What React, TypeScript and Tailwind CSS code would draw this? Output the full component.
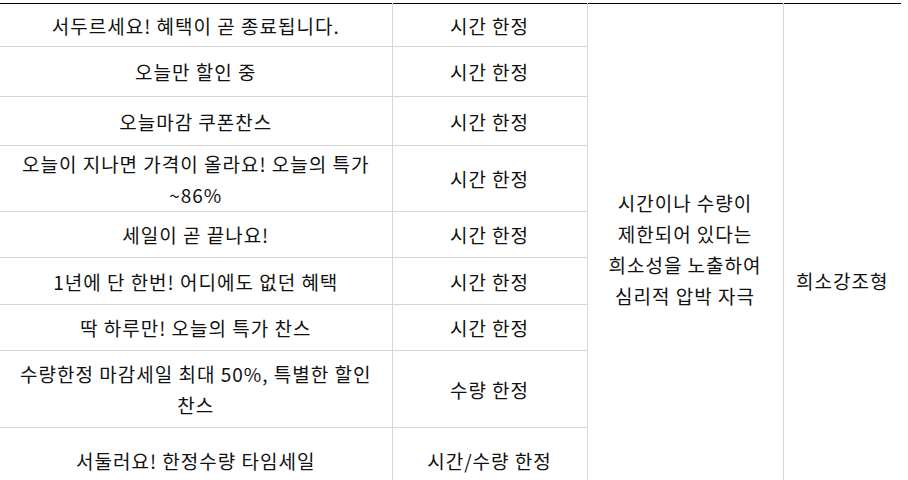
const rows: { text: string[]; kind: string; h: string }[] = [
  { text: ['서두르세요! 혜택이 곧 종료됩니다.'], kind: '시간 한정', h: 'h-[43px]' },
  { text: ['오늘만 할인 중'], kind: '시간 한정', h: 'h-[50px]' },
  { text: ['오늘마감 쿠폰찬스'], kind: '시간 한정', h: 'h-[49px]' },
  { text: ['오늘이 지나면 가격이 올라요! 오늘의 특가', '~86%'], kind: '시간 한정', h: 'h-[66px]' },
  { text: ['세일이 곧 끝나요!'], kind: '시간 한정', h: 'h-[46px]' },
  { text: ['1년에 단 한번! 어디에도 없던 혜택'], kind: '시간 한정', h: 'h-[47px]' },
  { text: ['딱 하루만! 오늘의 특가 찬스'], kind: '시간 한정', h: 'h-[46px]' },
  { text: ['수량한정 마감세일 최대 50%, 특별한 할인', '찬스'], kind: '수량 한정', h: 'h-[77px]' },
  { text: ['서둘러요! 한정수량 타임세일'], kind: '시간/수량 한정', h: 'h-[66px]' },
];

export default function App() {
  return (
    <div className="w-[908px] h-[480px] overflow-hidden bg-white pt-[3px] text-[19px] leading-[31px] text-[#111] tracking-[1px] [font-family:'Noto_Sans_CJK_KR','Noto_Sans',sans-serif]">
      <table className="w-[901px] table-fixed border-collapse">
        <colgroup>
          <col className="w-[392px]" />
          <col className="w-[195px]" />
          <col className="w-[196px]" />
          <col className="w-[118px]" />
        </colgroup>
        <tbody>
          {rows.map((r, i) => (
            <tr key={i} className={r.h}>
              <td className={`border-b border-r border-[#d6d6d6] text-center align-middle ${i === 0 ? 'border-t border-t-black' : ''}`}>
                {r.text.map((t) => (
                  <div key={t} className="whitespace-nowrap">{t}</div>
                ))}
              </td>
              <td className={`border-b border-r border-[#d6d6d6] text-center align-middle ${i === 0 ? 'border-t border-t-black' : ''}`}>
                {r.kind}
              </td>
              {i === 0 && (
                <>
                  <td rowSpan={9} className="border-t border-t-black border-b border-r border-[#d6d6d6] text-center align-middle">
                    <div>시간이나 수량이</div>
                    <div>제한되어 있다는</div>
                    <div>희소성을 노출하여</div>
                    <div>심리적 압박 자극</div>
                  </td>
                  <td rowSpan={10} className="border-t border-t-black border-b border-[#d6d6d6] text-center align-middle">
                    희소강조형
                  </td>
                </>
              )}
            </tr>
          ))}
          <tr className="h-[64px]">
            <td className="border-b border-r border-[#d6d6d6]"></td>
            <td className="border-b border-r border-[#d6d6d6]"></td>
            <td className="border-b border-r border-[#d6d6d6]"></td>
          </tr>
        </tbody>
      </table>
    </div>
  );
}
